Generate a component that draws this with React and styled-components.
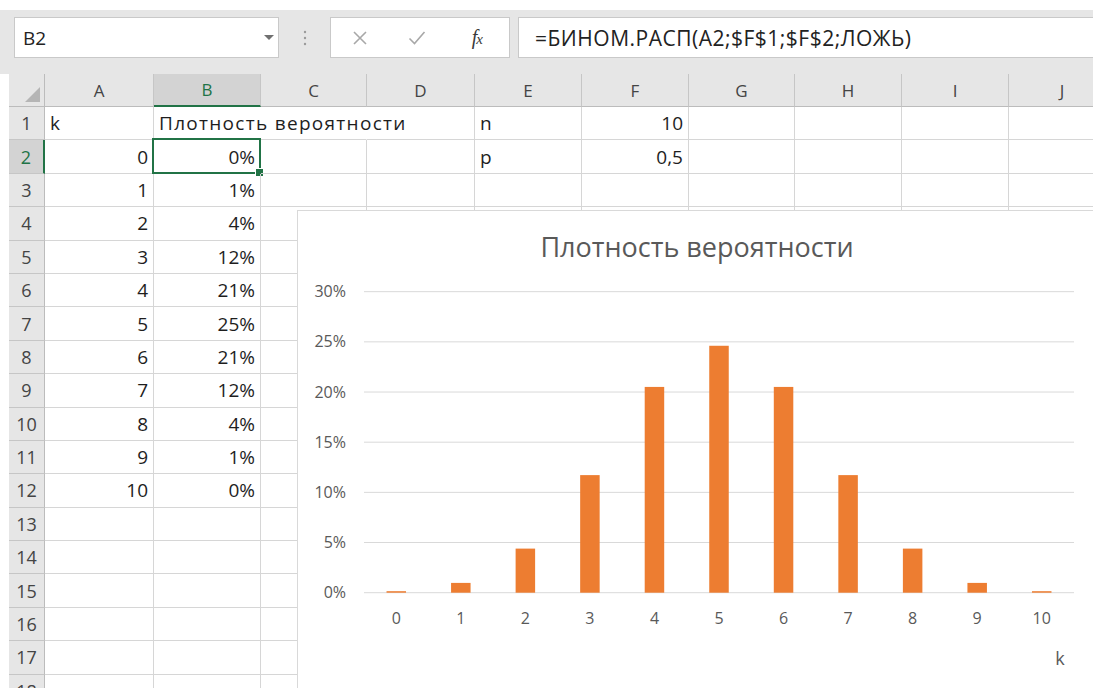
import React from 'react';
import styled, { createGlobalStyle } from 'styled-components';

const GlobalStyle = createGlobalStyle`
  html, body { margin: 0; padding: 0; background: #fff; overflow: hidden; }
  * { box-sizing: border-box; }
  body { font-family: "Open Sans", "Noto Sans", sans-serif; }
`;

const COLS = [
  { key: 'A', width: 109 },
  { key: 'B', width: 107 },
  { key: 'C', width: 106 },
  { key: 'D', width: 108 },
  { key: 'E', width: 107 },
  { key: 'F', width: 107 },
  { key: 'G', width: 106 },
  { key: 'H', width: 107 },
  { key: 'I', width: 107 },
  { key: 'J', width: 107 },
];

const ROW_COUNT = 18;
const PROBS = [0.000977, 0.009766, 0.043945, 0.117188, 0.205078, 0.246094, 0.205078, 0.117188, 0.043945, 0.009766, 0.000977];
const PCT = ['0%', '1%', '4%', '12%', '21%', '25%', '21%', '12%', '4%', '1%', '0%'];

// cell contents keyed by "row:col"
const CELLS = {
  '1:A': { text: 'k' },
  '1:B': { text: 'Плотность вероятности', joined: true },
  '1:C': { joined: true },
  '1:E': { text: 'n' },
  '1:F': { text: '10', align: 'right' },
  '2:E': { text: 'p' },
  '2:F': { text: '0,5', align: 'right' },
};
PROBS.forEach((_, i) => {
  CELLS[`${i + 2}:A`] = { text: String(i), align: 'right' };
  CELLS[`${i + 2}:B`] = { text: PCT[i], align: 'right' };
});

const ACTIVE = { row: 2, col: 'B' };

const Window = styled.div`
  width: 1093px;
  height: 688px;
  overflow: hidden;
  background: #fff;
  padding-top: 10px;
  font-family: "Open Sans", "Noto Sans", sans-serif;
`;

const FormulaBar = styled.div`
  height: 64px;
  background: #e6e6e6;
  display: flex;
  align-items: flex-start;
  padding: 7px 0 0 14px;
`;

const Field = styled.div`
  height: 41px;
  background: #fff;
  border: 1px solid #c9c9c9;
  display: flex;
  align-items: center;
`;

const NameBox = styled(Field)`
  width: 265px;
  padding: 0 4px 0 8px;
  justify-content: space-between;
  font-size: 19px;
  color: #222;
`;

const Caret = styled.span`
  width: 0;
  height: 0;
  border-left: 5px solid transparent;
  border-right: 5px solid transparent;
  border-top: 5px solid #707070;
`;

const Grip = styled.div`
  width: 51px;
  height: 41px;
  display: flex;
  align-items: center;
  justify-content: center;
`;

const ActionBox = styled(Field)`
  width: 180px;
`;

const ActionSlot = styled.div`
  width: ${p => p.$w}px;
  display: flex;
  justify-content: center;
  align-items: center;
`;

const FxLabel = styled.span`
  font-family: "Liberation Serif", "DejaVu Serif", serif;
  font-style: italic;
  font-size: 20px;
  color: #3a3a3a;
  letter-spacing: -1px;
  & small { font-size: 15px; }
`;

const FormulaInput = styled(Field)`
  flex: 1;
  margin-left: 8px;
  padding-left: 16px;
  border-right: none;
  font-size: 21px;
  letter-spacing: 0.5px;
  color: #222;
  white-space: nowrap;
`;

const SheetArea = styled.div`
  position: relative;
  padding-left: 9px;
`;

const Sheet = styled.div`
  display: grid;
  grid-template-columns: 36px ${COLS.map(c => `${c.width}px`).join(' ')};
  grid-template-rows: 33px repeat(${ROW_COUNT}, 33.4px);
`;

const Corner = styled.div`
  background: #e6e6e6;
  border-right: 1px solid #bcbcbc;
  border-bottom: 1px solid #bcbcbc;
  display: flex;
  align-items: flex-end;
  justify-content: flex-end;
  padding: 0 4px 4px 0;
  &::after {
    content: '';
    width: 15px;
    height: 15px;
    background: #b5b5b5;
    clip-path: polygon(100% 0, 100% 100%, 0 100%);
  }
`;

const ColHeader = styled.div`
  background: ${p => (p.$active ? '#d3d3d3' : '#e6e6e6')};
  color: ${p => (p.$active ? '#217346' : '#444')};
  border-right: 1px solid #c6c6c6;
  border-bottom: ${p => (p.$active ? '2px solid #217346' : '1px solid #bcbcbc')};
  display: flex;
  align-items: center;
  justify-content: center;
  font-size: 17px;
`;

const RowHeader = styled.div`
  background: ${p => (p.$active ? '#d3d3d3' : '#e6e6e6')};
  color: ${p => (p.$active ? '#217346' : '#444')};
  border-right: ${p => (p.$active ? '2px solid #217346' : '1px solid #bcbcbc')};
  border-bottom: 1px solid #c6c6c6;
  display: flex;
  align-items: center;
  justify-content: center;
  font-size: 18px;
`;

const Cell = styled.div`
  position: relative;
  min-width: 0;
  border-right: 1px solid ${p => (p.$joined ? 'transparent' : '#d6d6d6')};
  border-bottom: 1px solid #d6d6d6;
  display: flex;
  align-items: center;
  justify-content: ${p => (p.$align === 'right' ? 'flex-end' : 'flex-start')};
  padding: 0 5px 0 5px;
  font-size: 19px;
  letter-spacing: ${p => (p.$align === 'right' ? '0' : '1.3px')};
  color: #1e1e1e;
  white-space: nowrap;
  overflow: visible;
`;

const Selection = styled.div`
  position: absolute;
  left: -2px;
  top: -2px;
  right: -1px;
  bottom: -1px;
  border: 2px solid #217346;
  pointer-events: none;
  &::after {
    content: '';
    position: absolute;
    right: -5px;
    bottom: -5px;
    width: 7px;
    height: 7px;
    background: #217346;
    border: 1px solid #fff;
  }
`;

const ChartFrame = styled.div`
  position: absolute;
  left: 297px;
  top: 136px;
  width: 800px;
  height: 520px;
  background: #fff;
  border: 1px solid #d9d9d9;
  display: flex;
  flex-direction: column;
`;

const ChartTitle = styled.div`
  height: 62px;
  padding-top: 12px;
  line-height: 48px;
  text-align: center;
  font-size: 27px;
  color: #595959;
`;

const Plot = styled.svg`
  display: block;
  font-family: "Open Sans", "Noto Sans", sans-serif;
`;

// plot geometry, in px relative to the svg
const PLOT = { left: 66, right: 776, base: 319.7, step: 50.17, perUnit: 1003.4 };

function ColumnChart() {
  const catW = (PLOT.right - PLOT.left) / PROBS.length;
  const ticks = [0, 5, 10, 15, 20, 25, 30];
  return (
    <ChartFrame>
      <ChartTitle>Плотность вероятности</ChartTitle>
      <Plot width="800" height="440" viewBox="0 0 800 440">
        {ticks.map((t, i) => {
          const y = PLOT.base - i * PLOT.step;
          return (
            <g key={t}>
              <line x1={PLOT.left} x2={PLOT.right} y1={y} y2={y} stroke="#d9d9d9" strokeWidth="1" />
              <text x="48" y={y + 5.5} textAnchor="end" fontSize="16" fill="#595959">{`${t}%`}</text>
            </g>
          );
        })}
        {PROBS.map((v, i) => {
          const cx = PLOT.left + catW * (i + 0.5);
          const h = Math.max(v * PLOT.perUnit, 1.5);
          return (
            <g key={i}>
              <rect x={cx - 9.75} y={PLOT.base - h} width="19.5" height={h} fill="#ed7d31" />
              <text x={cx} y="350.5" textAnchor="middle" fontSize="16" fill="#595959">{i}</text>
            </g>
          );
        })}
        <text x="762" y="392" textAnchor="middle" fontSize="18" fill="#595959">k</text>
      </Plot>
    </ChartFrame>
  );
}

function Icons() {
  return (
    <>
      <ActionSlot $w={62}>
        <svg width="16" height="16" viewBox="0 0 16 16">
          <path d="M2 2 L14 14 M14 2 L2 14" stroke="#a8a8a8" strokeWidth="1.6" fill="none" />
        </svg>
      </ActionSlot>
      <ActionSlot $w={58}>
        <svg width="18" height="16" viewBox="0 0 18 16">
          <path d="M1.5 8.5 L6.5 13.5 L16.5 2" stroke="#a8a8a8" strokeWidth="1.6" fill="none" />
        </svg>
      </ActionSlot>
      <ActionSlot $w={68}>
        <FxLabel>f<small>x</small></FxLabel>
      </ActionSlot>
    </>
  );
}

export default function App() {
  const rows = Array.from({ length: ROW_COUNT }, (_, i) => i + 1);
  return (
    <Window>
      <GlobalStyle />
      <FormulaBar>
        <NameBox>
          <span>B2</span>
          <Caret />
        </NameBox>
        <Grip>
          <svg width="4" height="18" viewBox="0 0 4 18">
            <circle cx="2" cy="3" r="1.2" fill="#9a9a9a" />
            <circle cx="2" cy="9" r="1.2" fill="#9a9a9a" />
            <circle cx="2" cy="15" r="1.2" fill="#9a9a9a" />
          </svg>
        </Grip>
        <ActionBox>
          <Icons />
        </ActionBox>
        <FormulaInput>=БИНОМ.РАСП(A2;$F$1;$F$2;ЛОЖЬ)</FormulaInput>
      </FormulaBar>

      <SheetArea>
        <Sheet>
          <Corner />
          {COLS.map(c => (
            <ColHeader key={c.key} $active={c.key === ACTIVE.col}>{c.key}</ColHeader>
          ))}
          {rows.map(r => (
            <React.Fragment key={r}>
              <RowHeader $active={r === ACTIVE.row}>{r}</RowHeader>
              {COLS.map(c => {
                const cell = CELLS[`${r}:${c.key}`] || {};
                const isActive = r === ACTIVE.row && c.key === ACTIVE.col;
                return (
                  <Cell key={c.key} $align={cell.align} $joined={cell.joined}>
                    {cell.text}
                    {isActive && <Selection />}
                  </Cell>
                );
              })}
            </React.Fragment>
          ))}
        </Sheet>
        <ColumnChart />
      </SheetArea>
    </Window>
  );
}
